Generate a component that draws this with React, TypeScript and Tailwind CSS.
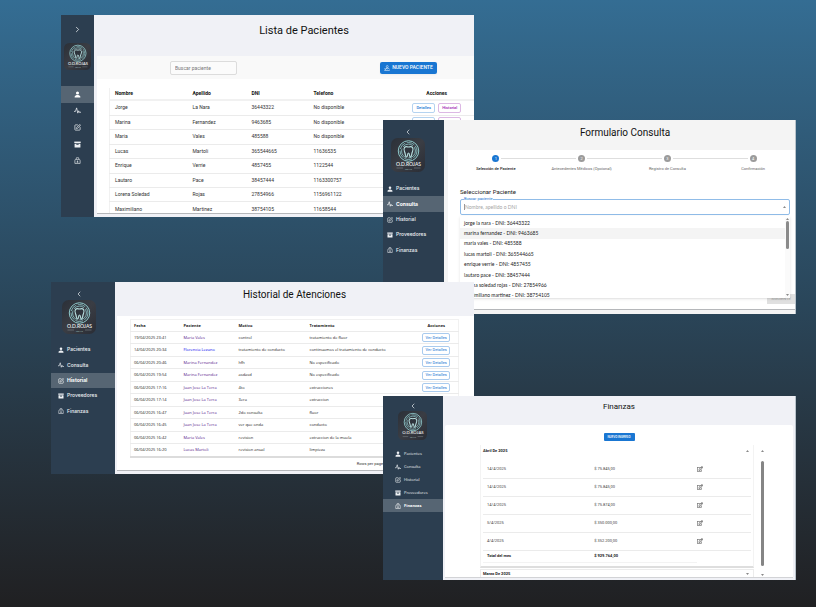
import { ChevronLeft, ChevronRight, SquarePen } from "lucide-react";
import { FaRegEdit } from "react-icons/fa";
import { IoPersonSharp } from "react-icons/io5";

function PulseIcon({ className }: { className: string }) {
  return (
    <svg viewBox="0 0 24 24" className={className} fill="none" stroke="currentColor" strokeWidth="2.6" strokeLinecap="round" strokeLinejoin="round" aria-hidden="true">
      <path d="M1 15h4L9 3l4 18 3-8 2 5h5" />
    </svg>
  );
}

function BoxIcon({ className }: { className: string }) {
  return (
    <svg viewBox="0 0 24 24" className={className} fill="currentColor" aria-hidden="true">
      <path d="M1 2h22v5H1z" />
      <path d="M2 9h20v13H2zM8 11v3h8v-3z" fillRule="evenodd" />
    </svg>
  );
}

function BagIcon({ className }: { className: string }) {
  return (
    <svg viewBox="0 0 24 24" className={className} fill="none" stroke="currentColor" strokeWidth="2.2" strokeLinejoin="round" aria-hidden="true">
      <path d="M8 8V5a4 4 0 0 1 8 0v3M5 8h14q2 2 2 5v9H3v-9q0-3 2-5zM12 12v7M9 17h6" />
    </svg>
  );
}

function Logo({ className }: { className: string }) {
  return (
    <svg viewBox="0 0 68 68" className={className} role="img" aria-label="O.D. Rojas">
      <defs>
        <linearGradient id="tile" x1="0" y1="0" x2="1" y2="1">
          <stop offset="0" stopColor="#2b3038" />
          <stop offset="0.5" stopColor="#3a3d44" />
          <stop offset="1" stopColor="#2a2d35" />
        </linearGradient>
      </defs>
      <rect width="68" height="68" rx="13" fill="url(#tile)" />
      <g fill="none" stroke="#8fc9cb">
        <circle cx="35" cy="26" r="20.5" strokeWidth="2" />
        <circle cx="35" cy="26" r="17" strokeWidth="1.6" strokeDasharray="16 3" />
        <circle cx="35" cy="26" r="13.8" strokeWidth="1.6" strokeDasharray="22 4" />
        <path d="M27 19c3-3 5-1 8-1s5-2 8 1c3 4 0 8-1 11-1 4-1 8-3 8-3 0-1-8-4-8s-1 8-4 8c-2 0-2-4-3-8-1-3-4-7-1-11z" fill="#2f343c" strokeWidth="2.4" stroke="#b5dcdc" />
      </g>
      <text x="35" y="55" textAnchor="middle" fontSize="10" fontWeight="500" fill="#f1f5f5" className="font-['Lato',sans-serif]">O.D.ROJAS</text>
      <path d="M11 60h13M46 60h13" stroke="#8d9498" strokeWidth="1" />
      <text x="35" y="63" textAnchor="middle" fontSize="4" fill="#a9c9ca" className="font-['Lato',sans-serif]">LOMAS</text>
    </svg>
  );
}

const sections = ["Pacientes", "Consulta", "Historial", "Proveedores", "Finanzas"];

function SectionIcon({ index, className }: { index: number; className: string }) {
  if (index === 0) return <IoPersonSharp className={className} />;
  if (index === 1) return <PulseIcon className={className} />;
  if (index === 2) return <SquarePen className={className} strokeWidth={2.4} />;
  if (index === 3) return <BoxIcon className={className} />;
  return <BagIcon className={className} />;
}

type SidebarProps = { active: number; width: string; top: string; logo: string; logoGap: string; nav: string; item: string };

function Sidebar({ active, width, top, logo, logoGap, nav, item }: SidebarProps) {
  return (
    <aside className={`flex shrink-0 flex-col bg-[#2c3e50] text-[#eef1f4] ${width} ${top}`}>
      <div className={`flex flex-col items-center self-start ${logoGap}`}>
        <button aria-label="Contraer menú" className="flex h-2 items-center">
          <ChevronLeft className="size-2" />
        </button>
        <Logo className={logo} />
      </div>
      <nav className={`flex flex-col leading-none ${nav}`}>
        {sections.map((name, i) => (
          <a key={name} href="#" className={`flex flex-1 items-center gap-[3px] ${item} ${i === active ? "bg-[#566573] font-bold text-white" : "font-medium"}`}>
            <SectionIcon index={i} className="size-[6px] shrink-0" />
            {name}
          </a>
        ))}
      </nav>
    </aside>
  );
}

const patients = [
  ["Jorge", "La Nara", "36443322", "No disponible"],
  ["Marina", "Fernandez", "9463685", "No disponible"],
  ["Maria", "Vales", "485588", "No disponible"],
  ["Lucas", "Martoli", "365544665", "11636535"],
  ["Enrique", "Verrie", "4857455", "1122544"],
  ["Lautaro", "Pace", "38457444", "1163300757"],
  ["Lorena Soledad", "Rojas", "27854966", "1156961122"],
  ["Maximiliano", "Martinez", "38754105", "11658544"],
];

function PatientsWindow() {
  return (
    <section className="absolute top-[15px] right-[342px] left-[61px] flex h-[202px] overflow-hidden">
      <aside className="flex w-[33px] shrink-0 flex-col items-center bg-[#2c3e50] pt-[10px] text-[#eef1f4]">
        <button aria-label="Expandir menú" className="flex h-2 items-center">
          <ChevronRight className="size-[9px]" />
        </button>
        <Logo className="mt-[10px] size-[27px]" />
        <nav className="mt-4 flex h-[83px] w-full flex-col">
          {sections.map((name, i) => (
            <a key={name} href="#" aria-label={name} className={`flex flex-1 items-center justify-center ${i === 0 ? "bg-[#566573] text-white" : ""}`}>
              <SectionIcon index={i} className="size-[7px]" />
            </a>
          ))}
        </nav>
      </aside>
      <div className="flex min-w-0 flex-1 flex-col bg-[#f0f1f6] pb-[3px]">
        <h2 className="flex h-[41px] shrink-0 items-center justify-center pb-[11px] pl-10 text-[11px] leading-none text-[#111]">Lista de Pacientes</h2>
        <div className="ml-[3px] min-h-0 flex-1 overflow-hidden border-b border-[#b5b7ba] bg-white">
          <div className="flex h-[23px] items-center justify-between bg-[#f9f9f9] pr-[37px] pl-[73px]">
            <input aria-label="Buscar paciente" placeholder="Buscar paciente" className="h-[14px] w-[67px] rounded-xs border border-[#dcdcdc] bg-[#fbfbfb] px-1 text-[5px] leading-none placeholder:text-[#777]" />
            <button className="flex h-3 w-[57px] items-center justify-center gap-[2px] rounded-xs bg-[#1976d2] text-[5px] leading-none font-medium whitespace-nowrap text-white shadow-xs">
              <svg viewBox="0 0 24 24" className="size-[6px] shrink-0" fill="none" stroke="currentColor" strokeWidth="2" aria-hidden="true">
                <circle cx="13" cy="6" r="4" />
                <path d="M1 22h22M5 18c0-4 3-6 8-6s8 2 9 6M1 14l7 6M8 12l5 5 4-4" />
              </svg>
              NUEVO PACIENTE
            </button>
          </div>
          <table className="mt-[9px] ml-3 h-[129px] w-[calc(100%-12px)] table-fixed border-l border-[#f1f1f1] text-left text-[5px] leading-none text-[#333]">
            <colgroup>
              <col className="w-[78px]" />
              <col className="w-[59px]" />
              <col className="w-[62px]" />
              <col className="w-[91px]" />
              <col />
            </colgroup>
            <thead>
              <tr className="h-3 border-b-2 border-[#f1f1f1] font-bold text-[#111]">
                <th className="pl-[5px]">Nombre</th>
                <th className="pl-[5px]">Apellido</th>
                <th className="pl-[5px]">DNI</th>
                <th className="pl-[5px]">Telefono</th>
                <th className="text-center">Acciones</th>
              </tr>
            </thead>
            <tbody>
              {patients.map((row) => (
                <tr key={row[2]} className="border-b border-[#ebebeb]">
                  {row.map((cell, i) => (
                    <td key={i} className="p-0 pl-[5px] whitespace-nowrap">{cell}</td>
                  ))}
                  <td className="p-0">
                    <div className="flex justify-center gap-[3px] text-[4px] font-medium">
                      <button className="h-[10px] w-[23px] rounded-xs border border-[#b5d3f0] text-[#1976d2]">Detalles</button>
                      <button className="h-[10px] w-[23px] rounded-xs border border-[#dcb8e4] text-[#9c27b0]">Historial</button>
                    </div>
                  </td>
                </tr>
              ))}
            </tbody>
          </table>
        </div>
      </div>
    </section>
  );
}

const steps = ["Selección de Paciente", "Antecedentes Médicos (Opcional)", "Registro de Consulta", "Confirmación"];

const options = [
  "jorge la nara - DNI: 36443322",
  "marina fernandez - DNI: 9463685",
  "maria vales - DNI: 485588",
  "lucas martoli - DNI: 365544665",
  "enrique verrie - DNI: 4857455",
  "lautaro pace - DNI: 38457444",
  "lorena soledad rojas - DNI: 27854966",
  "maximiliano martinez - DNI: 38754105",
];

function Caret({ down = false }: { down?: boolean }) {
  return (
    <svg viewBox="0 0 6 4" className="h-[2px] w-[3px] shrink-0" fill="#8a8a8a" aria-hidden="true">
      <path d={down ? "M0 0h6L3 4z" : "M0 4h6L3 0z"} />
    </svg>
  );
}

function FormWindow() {
  return (
    <section className="absolute top-[120px] right-5 left-[383px] flex h-[194px] overflow-hidden border-r border-[#b9c3cb]">
      <Sidebar active={1} width="w-[61px]" top="pt-2" logo="mt-[2px] size-[34px]" logoGap="ml-2" nav="mt-[9px] h-[77px] font-['Inter',sans-serif] text-[5px]" item="pl-1" />
      <div className="flex min-w-0 flex-1 flex-col bg-[#f4f4f4] pb-1">
        <h2 className="flex h-[30px] shrink-0 items-center justify-center pb-[5px] pl-[11px] text-[10px] leading-none text-[#111]">Formulario Consulta</h2>
        <div className="ml-1 flex min-h-0 flex-1 flex-col border-b border-[#b5b7ba] bg-white">
          <ol className="-mr-px flex pt-[5px] pl-[5px]">
            {steps.map((step, i) => (
              <li key={step} className="min-w-0 flex-1">
                <div className="flex items-center gap-[2px]">
                  <span className={`h-px flex-1 ${i === 0 ? "" : "bg-[#dedede]"}`} />
                  <span className={`flex size-[7px] items-center justify-center rounded-full text-[4px] leading-none text-white ${i === 0 ? "bg-[#1976d2]" : "bg-[#9b9b9b]"}`}>{i + 1}</span>
                  <span className={`h-px flex-1 ${i === 3 ? "" : "bg-[#dedede]"}`} />
                </div>
                <p className={`mt-[5px] text-center text-[4px] leading-none whitespace-nowrap ${i === 0 ? "font-medium text-[#222]" : "text-[#666]"}`}>{step}</p>
              </li>
            ))}
          </ol>
          <h3 className="mt-[18px] pl-3 text-[6px] leading-none text-[#222]">Seleccionar Paciente</h3>
          <div className="relative mt-1 mr-[5px] ml-3 font-['Lato',sans-serif]">
            <label htmlFor="patient-search" className="absolute -top-[2px] left-1 bg-white text-[4px] leading-none font-['Roboto',sans-serif] text-[#1976d2]">Buscar paciente</label>
            <div className="flex h-4 items-center rounded-xs border border-[#90bce8] px-[3px]">
              <input id="patient-search" placeholder="Nombre, apellido o DNI" className="min-w-0 flex-1 border-l border-[#999] text-[5px] leading-none placeholder:text-[#a5a5a5]" />
              <Caret />
            </div>
            <div className="absolute top-[17px] right-0 left-0 flex h-[82px] overflow-hidden bg-white pt-[2px] shadow-sm">
              <ul role="listbox" aria-label="Pacientes" className="flex h-[83px] flex-1 flex-col text-[5px] leading-none text-[#222]">
                {options.map((option, i) => (
                  <li key={option} role="option" aria-selected={i === 1} className={`flex flex-1 items-center pl-1 ${i === 1 ? "bg-[#f4f4f4]" : ""}`}>{option}</li>
                ))}
              </ul>
              <div className="flex w-[5px] flex-col items-center bg-[#fafafa] pb-[2px]">
                <Caret />
                <span className="mt-px h-7 w-[3px] rounded-full bg-[#8b8b8b]" />
                <span className="flex-1" />
                <Caret down />
              </div>
            </div>
          </div>
          <button disabled className="mt-auto mb-[5px] h-[10px] w-7 self-end bg-[#e0e0e0] text-[4px] leading-none text-[#a6a6a6]">SIGUIENTE</button>
        </div>
      </div>
    </section>
  );
}

const visits = [
  ["19/04/2025 23:41", "Maria Vales", "control", "tratamiento de fluor"],
  ["14/04/2025 20:34", "Florencia Lezano", "tratamiento de conducto", "continuamos el tratamiento de conducto"],
  ["06/04/2025 20:46", "Marina Fernandez", "hfh", "No especificado"],
  ["06/04/2025 19:54", "Marina Fernandez", "asdasd", "No especificado"],
  ["06/04/2025 17:16", "Juan Jose La Terra", "4to", "extracciones"],
  ["06/04/2025 17:14", "Juan Jose La Terra", "3era", "extraccion"],
  ["06/04/2025 16:47", "Juan Jose La Terra", "2do consulta", "fluor"],
  ["06/04/2025 16:45", "Juan Jose La Terra", "ver que onda", "conducto"],
  ["06/04/2025 16:42", "Maria Vales", "revision", "extraccion de la muela"],
  ["06/04/2025 16:20", "Lucas Martoli", "revision anual", "limpieza"],
];

function HistoryWindow() {
  return (
    <section className="absolute top-[282px] right-[342px] left-[51px] flex h-[192px] overflow-hidden">
      <Sidebar active={2} width="w-[64px]" top="pt-2" logo="mt-[2px] size-[34px]" logoGap="ml-[11px]" nav="mt-2 h-[77px] font-['Inter',sans-serif] text-[5px]" item="pl-[7px]" />
      <div className="flex min-w-0 flex-1 flex-col bg-[#f0f1f6] pb-[3px]">
        <h2 className="flex h-[34px] shrink-0 items-center justify-center pb-[9px] text-[10px] leading-none text-[#111]">Historial de Atenciones</h2>
        <div className="ml-[2px] min-h-0 flex-1 overflow-hidden border-b border-[#b5b7ba] bg-white pr-[15px] pl-[13px] font-['Open_Sans',sans-serif]">
          <table className="mt-[3px] h-[139px] w-full table-fixed border border-b-2 border-[#f1f1f1] border-b-[#dcdcdc] text-left text-[4px] leading-none text-[#222]">
            <colgroup>
              <col className="w-[50px]" />
              <col className="w-[55px]" />
              <col className="w-[71px]" />
              <col className="w-[108px]" />
              <col />
            </colgroup>
            <thead>
              <tr className="h-3 border-b border-[#ebebeb]">
                <th className="pl-[3px]">Fecha</th>
                <th className="pl-[3px]">Paciente</th>
                <th className="pl-[3px]">Motivo</th>
                <th className="pl-[3px]">Tratamiento</th>
                <th className="text-center">Acciones</th>
              </tr>
            </thead>
            <tbody>
              {visits.map(([date, patient, reason, treatment], i) => (
                <tr key={date} className="border-b border-[#ebebeb]">
                  <td className="p-0 pl-[3px] whitespace-nowrap">{date}</td>
                  <td className="p-0 pl-[3px] whitespace-nowrap">
                    <a href="#" className={`block ${i === 1 ? "text-[#0000ee]" : "text-[#551a8b]"}`}>{patient}</a>
                  </td>
                  <td className="p-0 pl-[3px] whitespace-nowrap">{reason}</td>
                  <td className="p-0 pl-[3px] whitespace-nowrap">{treatment}</td>
                  <td className="p-0">
                    <button className="mx-auto block h-[9px] w-7 rounded-xs border border-[#a9cbee] font-['Roboto',sans-serif] whitespace-nowrap text-[#1976d2]">Ver Detalles</button>
                  </td>
                </tr>
              ))}
            </tbody>
          </table>
          <p className="mt-1 pr-[75px] text-right font-['Roboto',sans-serif] text-[4px] leading-none text-[#333]">Rows per page:</p>
        </div>
      </div>
    </section>
  );
}

const income = [
  ["14/4/2025", "$ 75.845,00"],
  ["14/4/2025", "$ 75.845,00"],
  ["14/4/2025", "$ 75.874,00"],
  ["5/4/2025", "$ 350.000,00"],
  ["4/4/2025", "$ 352.200,00"],
];

function FinanceWindow() {
  return (
    <section className="absolute top-[396px] right-5 left-[383px] flex h-[184px] overflow-hidden border-r border-[#b9c3cb]">
      <Sidebar active={4} width="w-[60px]" top="pt-[6px]" logo="mt-px size-[29px]" logoGap="ml-[15px]" nav="mt-[7px] h-[65px] font-['Open_Sans',sans-serif] text-[4px]" item="pl-3" />
      <div className="flex min-w-0 flex-1 flex-col bg-[#f0f1f6] pb-[2px]">
        <h2 className="flex h-[29px] shrink-0 items-center justify-center pb-2 text-[8px] leading-none text-[#111]">Finanzas</h2>
        <div className="mr-[2px] ml-[2px] flex min-h-0 flex-1 flex-col overflow-hidden rounded-t-xs border-b border-[#d2d3d6] bg-white text-[4px] leading-none text-[#222]">
          <button className="mt-2 h-2 w-[31px] shrink-0 self-center rounded-[1px] bg-[#1976d2] text-[3px] font-medium whitespace-nowrap text-white">NUEVO INGRESO</button>
          <div className="mt-1 flex min-h-0 flex-1 pr-[28px] pl-[35px]">
            <div className="min-w-0 flex-1">
              <div className="border-x border-b-2 border-[#f3f3f3] border-b-[#dedede] px-[2px]">
                <h3 className="flex h-3 items-center justify-between pr-[2px] font-bold">
                  Abril De 2025
                  <Caret />
                </h3>
                <table className="mt-[3px] w-full table-fixed text-left">
                  <colgroup>
                    <col className="w-2/5" />
                    <col className="w-2/5" />
                    <col className="w-1/5" />
                  </colgroup>
                  <tbody>
                    {income.map(([date, amount], i) => (
                      <tr key={i} className="h-[18px] border-b border-[#ebebeb] text-[#444]">
                        <td className="p-0 pl-1">{date}</td>
                        <td className="p-0 pl-1">{amount}</td>
                        <td className="p-0">
                          <button aria-label="Editar ingreso" className="block">
                            <FaRegEdit className="size-[6px]" />
                          </button>
                        </td>
                      </tr>
                    ))}
                    <tr className="h-3 font-bold">
                      <th className="border-b border-[#f3f3f3] p-0 pl-1">Total del mes</th>
                      <td className="border-b border-[#f3f3f3] p-0 pl-1">$ 929.764,00</td>
                    </tr>
                  </tbody>
                </table>
                <div className="h-[3px]" />
              </div>
              <div className="mt-px border border-b-0 border-[#ececec] px-[2px]">
                <h3 className="flex h-2 items-center justify-between pr-[2px] font-bold">
                  Marzo De 2025
                  <Caret down />
                </h3>
              </div>
            </div>
            <div className="ml-[6px] flex w-[5px] flex-col items-center pt-[5px] pb-px">
              <Caret />
              <span className="mt-[9px] h-[105px] w-[3px] rounded-full bg-[#858585]" />
              <span className="flex-1" />
              <Caret down />
            </div>
          </div>
        </div>
      </div>
    </section>
  );
}

export default function App() {
  return (
    <main className="relative min-h-screen overflow-hidden bg-linear-to-b from-[#346d93] via-[#2a465a] to-[#202022] font-['Roboto',sans-serif]">
      <PatientsWindow />
      <FormWindow />
      <HistoryWindow />
      <FinanceWindow />
    </main>
  );
}
